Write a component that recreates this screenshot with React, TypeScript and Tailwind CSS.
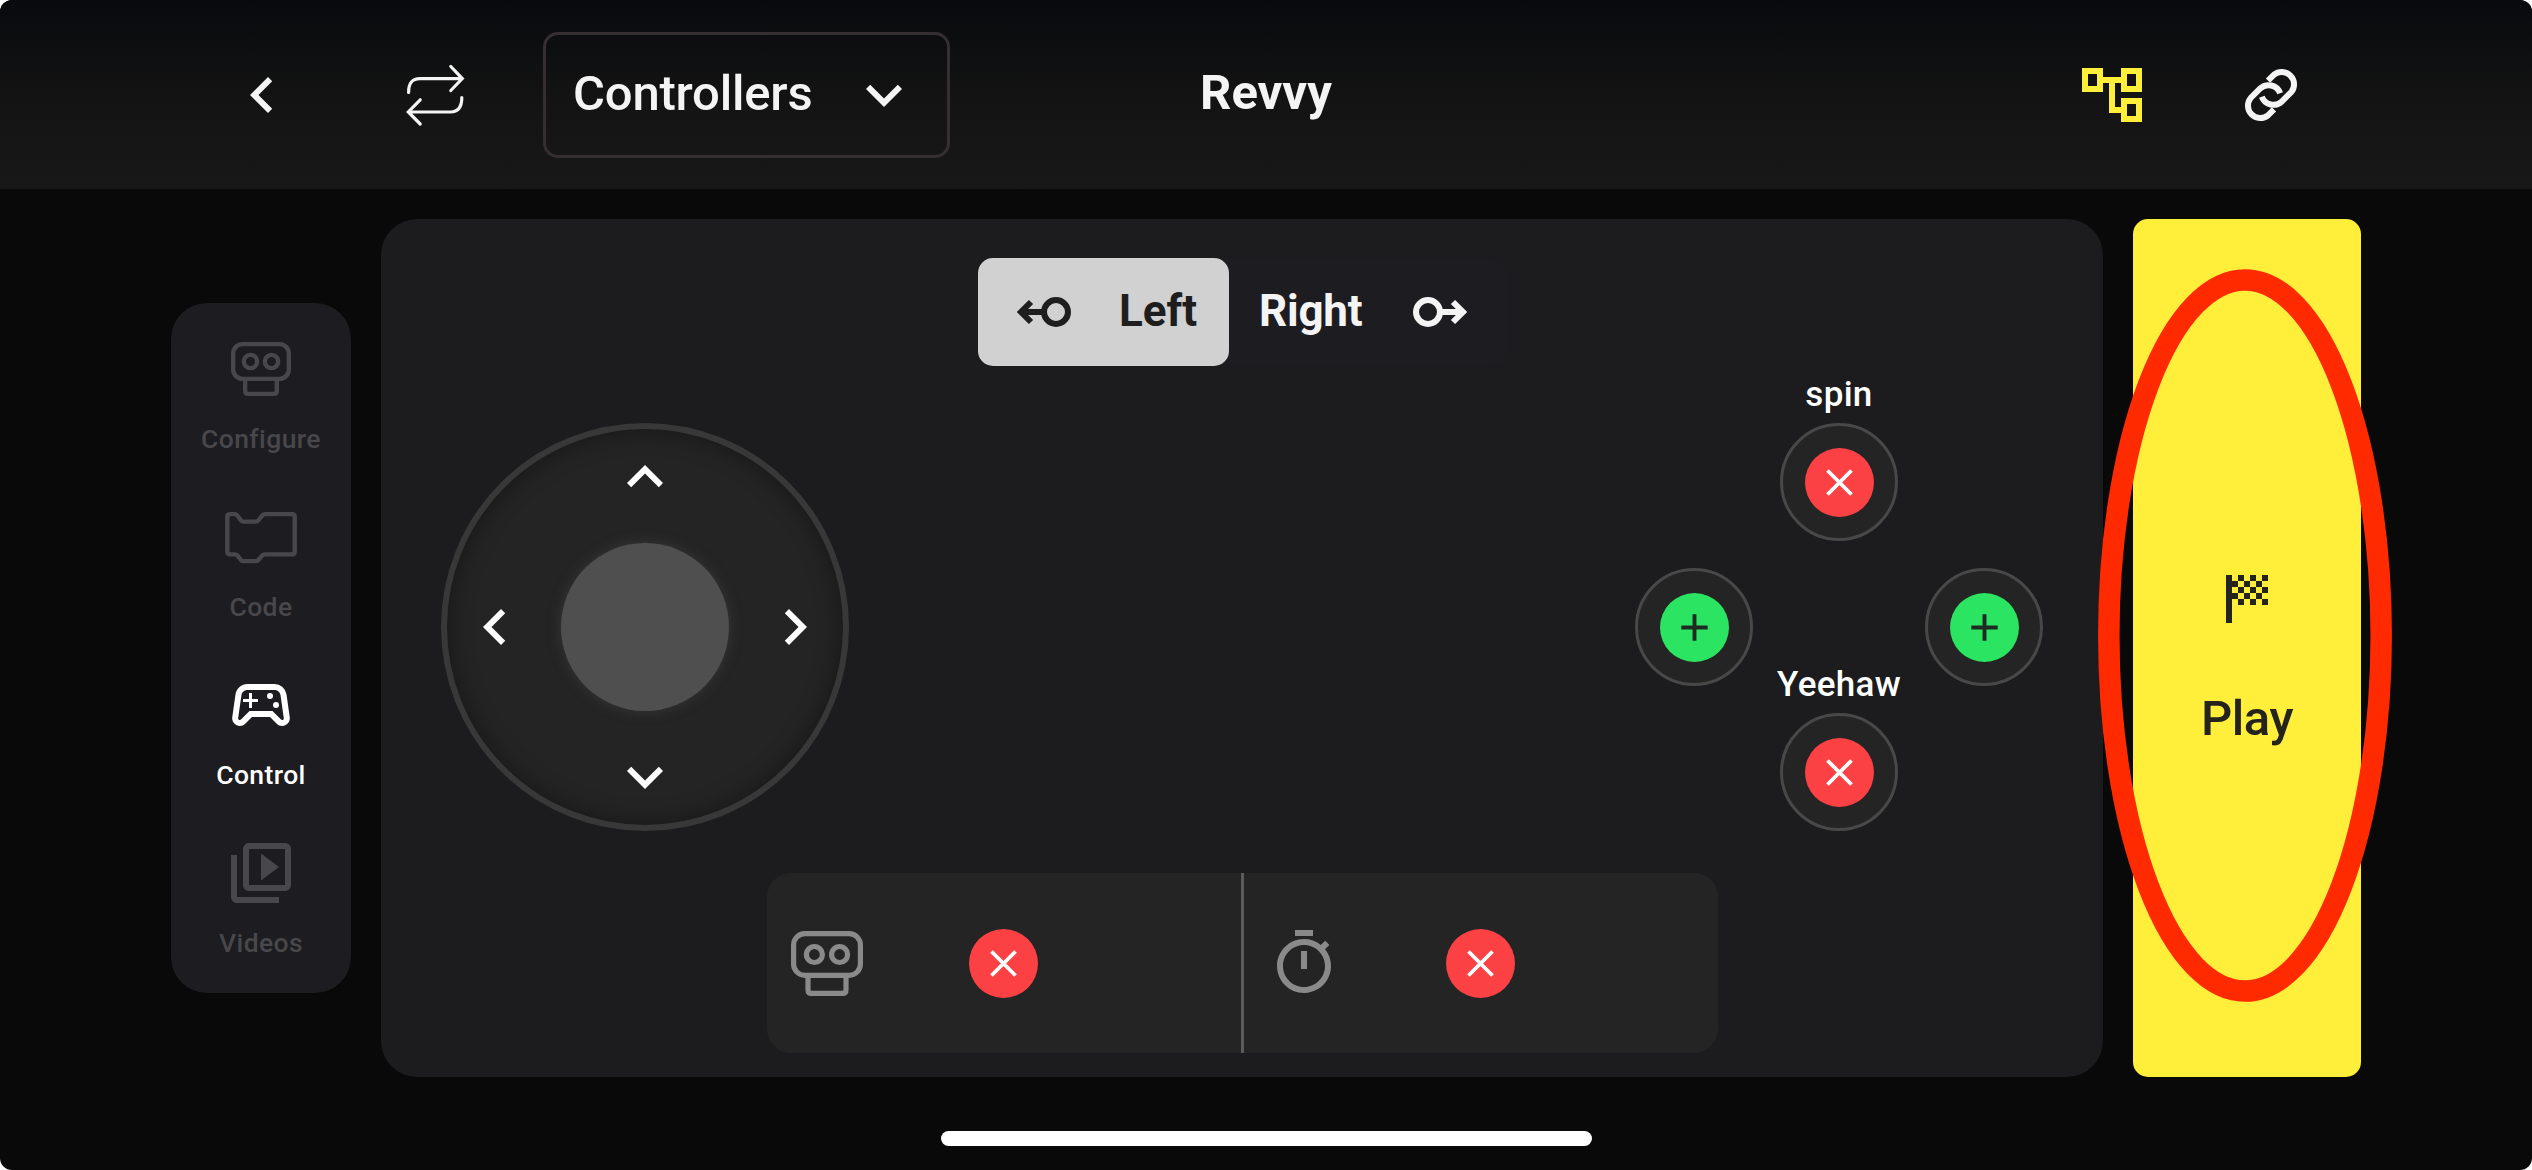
import React from "react";
import {
  MdOutlineAccountTree,
  MdOutlineSportsEsports,
  MdOutlineTimer,
  MdOutlineVideoLibrary,
} from "react-icons/md";

function Chevron({ className = "" }: { className?: string }) {
  return (
    <svg viewBox="0 0 72 72" className={`size-[72px] ${className}`} fill="currentColor">
      <path d="M46.2 22.2 42 18 24 36l18 18 4.2-4.2L32.5 36z" />
    </svg>
  );
}

function RepeatIcon() {
  return (
    <svg viewBox="405 63 60 64" className="h-16 w-[60px]" fill="none" stroke="#f4f4f4" strokeWidth="3.2" strokeLinecap="round">
      <path d="M408.6 92.5C408.6 83 412 78.6 420 78.6H462M450.8 66.5 462.3 78.6 450.8 90.5" />
      <path d="M461.8 97.5C461.8 107 458.5 112 450.5 112H408.5M420.2 99.8 408.3 112 420.2 124" />
    </svg>
  );
}

function LinkIcon() {
  return (
    <svg viewBox="612 114 162 162" className="size-[54px]" fill="none" stroke="#f4f4f4" strokeWidth="18">
      <path d="M684 152 702 134A37 37 0 0 1 754 186L726 214A37 37 0 0 1 665.5 200" />
      <path d="M702 238 684 256A37 37 0 0 1 632 204L660 176A37 37 0 0 1 720.5 190" />
    </svg>
  );
}

function BotIcon({ className }: { className: string }) {
  return (
    <svg viewBox="243 186 180 162" className={className} fill="none" stroke="currentColor" strokeWidth="13">
      <rect x="249.5" y="192.5" width="167" height="104" rx="28" />
      <circle cx="301.5" cy="244.5" r="20" />
      <circle cx="364.5" cy="244.5" r="20" />
      <path d="M285.5 298V333Q285.5 341.5 294 341.5H372Q380.5 341.5 380.5 333V298" />
    </svg>
  );
}

function CodeIcon() {
  return (
    <svg viewBox="222 690 222 160" className="h-[53px] w-[74px]" fill="none" stroke="currentColor" strokeWidth="13.5" strokeLinejoin="round">
      <path d="M229 706Q229 698 237 698H252Q257 698 260 702L271 717Q274 721 279 721H317Q322 721 325 717L337 702Q340 698 345 698H429Q437 698 437 706V814Q437 822 429 822H345Q340 822 337 825L325 839Q322 843 317 843H279Q274 843 271 839L260 825Q257 822 252 822H237Q229 822 229 814Z" />
    </svg>
  );
}

function KeyArrow({ flip = false }: { flip?: boolean }) {
  return (
    <svg viewBox="0 0 54 30" className={flip ? "h-[30px] w-[54px] -scale-x-100" : "h-[30px] w-[54px]"} fill="none" stroke="currentColor">
      <circle cx="39" cy="15" r="12" strokeWidth="6" />
      <path d="M5 15H27M14 5 4 15 14 25" strokeWidth="6" />
    </svg>
  );
}

function FlagIcon() {
  const cells = [0, 1, 2, 3, 4].flatMap((row) =>
    [0, 1, 2].map((i) => ({ x: 1 + i * 2 + (row % 2 === 0 ? 1 : 0), y: row })),
  );
  return (
    <svg viewBox="0 0 7 8" className="h-12 w-[42px]" fill="#24231c" shapeRendering="crispEdges">
      <rect width="1" height="8" />
      {cells.map((c) => (
        <rect key={`${c.x}-${c.y}`} x={c.x} y={c.y} width="1" height="1" />
      ))}
    </svg>
  );
}

function RemoveBadge() {
  return (
    <svg viewBox="0 0 69 69" className="size-[69px] shrink-0">
      <circle cx="34.5" cy="34.5" r="34.5" fill="#fb4144" />
      <path d="M22.5 22.5 46.5 46.5M46.5 22.5 22.5 46.5" stroke="#fff" strokeWidth="3.8" />
    </svg>
  );
}

function AddBadge() {
  return (
    <svg viewBox="0 0 69 69" className="size-[69px] shrink-0">
      <circle cx="34.5" cy="34.5" r="34.5" fill="#2be461" />
      <path d="M34.5 21.3V47.7M21.3 34.5H47.7" stroke="#1f2a22" strokeWidth="3.9" />
    </svg>
  );
}

function PadButton({ label, className, children }: { label?: string; className: string; children: React.ReactNode }) {
  return (
    <button className={`relative flex size-[118px] items-center justify-center rounded-full border-3 border-[#484848] bg-[#242424] ${className}`}>
      {label && (
        <span className="absolute bottom-[118px] left-1/2 -translate-x-1/2 whitespace-nowrap text-[35px] leading-[50px] font-medium tracking-[0.3px] text-white">
          {label}
        </span>
      )}
      {children}
    </button>
  );
}

function NavItem({ label, active = false, children }: { label: string; active?: boolean; children: React.ReactNode }) {
  return (
    <a className={`flex flex-col items-center ${active ? "text-white" : "text-[#48474b]"}`}>
      <span className="flex size-[72px] items-center justify-center">{children}</span>
      <span className="mt-3.5 text-[26.5px] leading-10 font-medium tracking-[0.4px]">{label}</span>
    </a>
  );
}

export default function App() {
  return (
    <div className="h-[1170px] w-[2532px] overflow-hidden bg-white">
      <div className="relative flex h-full flex-col overflow-hidden rounded-[12px] bg-[#090909] font-['Roboto',sans-serif]">
        <header className="flex h-[189px] shrink-0 items-center bg-linear-to-b from-[#080a0d] via-[#131313] to-[#181818] pt-px pr-[234px] pl-[226px] text-[#f4f4f4]">
          <Chevron />
          <div className="ml-[107px]">
            <RepeatIcon />
          </div>
          <div className="ml-[78px] flex h-[126px] w-[407px] items-center rounded-[15px] border-3 border-[#352f31] pl-[27px]">
            <span className="-mt-[3px] w-[242px] text-[49px] leading-none font-medium tracking-[-0.2px] whitespace-nowrap">Controllers</span>
            <Chevron className="ml-[33px] -rotate-90" />
          </div>
          <h1 className="-mt-[5px] ml-[250px] text-[49px] leading-none font-bold">Revvy</h1>
          <MdOutlineAccountTree className="ml-auto size-[72px] text-[#ffee3a]" />
          <div className="ml-24">
            <LinkIcon />
          </div>
        </header>

        <main className="flex gap-[30px] pt-[30px] pl-[171px]">
          <nav className="mt-[84px] flex h-[690px] w-[180px] flex-col gap-[42px] rounded-[36px] bg-[#1d1c20] py-[30px]">
            <NavItem label="Configure">
              <BotIcon className="h-[54px] w-[60px]" />
            </NavItem>
            <NavItem label="Code">
              <CodeIcon />
            </NavItem>
            <NavItem label="Control" active>
              <MdOutlineSportsEsports className="size-[72px]" />
            </NavItem>
            <NavItem label="Videos">
              <MdOutlineVideoLibrary className="size-[72px]" />
            </NavItem>
          </nav>

          <section className="flex h-[858px] w-[1722px] flex-col rounded-[36px] bg-[#1c1c1e] pt-[39px]">
            <div className="ml-[597px] flex h-[108px] w-[528px] rounded-[15px] bg-[#1d1c20] text-[44px] leading-none font-bold">
              <button className="flex w-[251px] items-center rounded-[15px] bg-[#d1d1d1] pl-[39px] text-[#1f1e1e]">
                <KeyArrow />
                <span className="-mt-[3px] ml-12 tracking-[0px]">Left</span>
              </button>
              <button className="flex flex-1 items-center pl-[30px] text-[#f4f4f4]">
                <span className="-mt-[3px] w-[154px] text-left tracking-[-0.2px]">Right</span>
                <KeyArrow flip />
              </button>
            </div>

            <div className="mt-[57px] flex justify-between px-[60px]">
              <div className="grid size-[408px] grid-cols-[72px_168px_72px] grid-rows-[72px_168px_72px] place-content-center place-items-center gap-[30px] rounded-full border-6 border-[#383838] bg-[#242424] text-white shadow-[inset_0_0_24px_rgba(0,0,0,0.4)]">
                <Chevron className="col-start-2 rotate-90" />
                <Chevron className="col-start-1 row-start-2" />
                <div className="col-start-2 row-start-2 size-[168px] rounded-full bg-[#4f4f4f] shadow-[0_0_14px_rgba(80,80,80,0.45)]" />
                <Chevron className="col-start-3 row-start-2 rotate-180" />
                <Chevron className="col-start-2 row-start-3 -rotate-90" />
              </div>

              <div className="grid size-[408px] grid-cols-3 grid-rows-3 gap-[27px]">
                <PadButton label="spin" className="col-start-2 row-start-1">
                  <RemoveBadge />
                </PadButton>
                <PadButton className="col-start-1 row-start-2">
                  <AddBadge />
                </PadButton>
                <PadButton className="col-start-3 row-start-2">
                  <AddBadge />
                </PadButton>
                <PadButton label="Yeehaw" className="col-start-2 row-start-3">
                  <RemoveBadge />
                </PadButton>
              </div>
            </div>

            <div className="mt-[42px] ml-[386px] flex h-[180px] w-[951px] rounded-[24px] bg-[#242424] text-[#8a8a8a]">
              <div className="flex w-[477px] items-center border-r-3 border-[#5b5b5b] pl-6">
                <BotIcon className="h-[65px] w-[72px]" />
                <div className="ml-[106px]">
                  <RemoveBadge />
                </div>
              </div>
              <div className="flex flex-1 items-center pl-6">
                <MdOutlineTimer className="size-[72px]" />
                <div className="ml-[106px]">
                  <RemoveBadge />
                </div>
              </div>
            </div>
          </section>

          <button className="flex h-[858px] w-[228px] flex-col items-center rounded-[15px] bg-[#ffee3a] pt-[356px] text-[#24231c]">
            <FlagIcon />
            <span className="mt-[71px] text-[49px] leading-[50px] font-medium tracking-[-0.4px]">Play</span>
          </button>
        </main>

        <div className="mt-[54px] ml-[941px] h-[15px] w-[651px] rounded-full bg-white" />

        <svg viewBox="0 0 294 733" className="pointer-events-none absolute top-[269px] left-[2098px] h-[733px] w-[294px]">
          <ellipse cx="147" cy="366.5" rx="136.2" ry="355.6" fill="none" stroke="#ff2a00" strokeWidth="21.5" />
        </svg>
      </div>
    </div>
  );
}
